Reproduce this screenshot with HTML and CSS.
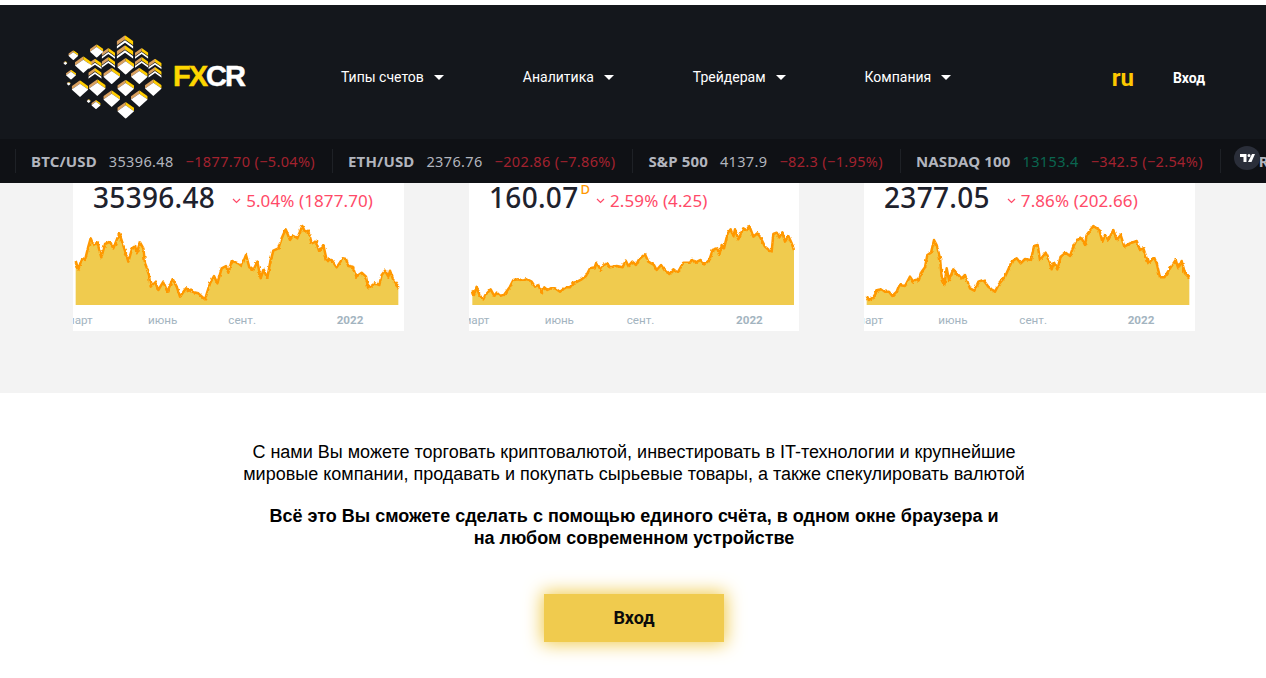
FILE: index.html
```html
<!DOCTYPE html>
<html lang="ru">

<head>
    <meta charset="UTF-8">
    <title>FXCR</title>
    <link rel="stylesheet" href="styles.css">
</head>

<body>

    <svg class="defs" width="0" height="0">
        <defs>
            <symbol id="cube" viewBox="-10 -10 20 20">
                <polygon points="-10,-3 0,-10 0,-6 -10,1" fill="#d9a05e"/>
                <polygon points="10,-3 0,-10 0,-6 10,1" fill="#ffcc00"/>
                <polygon points="-10,1 0,-6 10,1 0,10" fill="#fff"/>
            </symbol>
            <symbol id="chevron" viewBox="-10 -10 20 20">
                <polygon points="-10,-3 0,-10 0,-5 -10,2" fill="#d9a05e"/>
                <polygon points="10,-3 0,-10 0,-5 10,2" fill="#ffcc00"/>
                <polygon points="-10,3 0,-4 10,3 10,6 0,-1 -10,6" fill="#fff"/>
            </symbol>
            <filter id="rough" x="-5%" y="-5%" width="110%" height="110%">
                <feTurbulence type="fractalNoise" baseFrequency="0.09" numOctaves="2" seed="4"/>
                <feDisplacementMap in="SourceGraphic" scale="9" xChannelSelector="R" yChannelSelector="G"/>
            </filter>
        </defs>
    </svg>

    <header class="site-header">
        <a class="logo" href="#">
            <svg class="logo-mark" viewBox="0 0 330 270" width="110" height="90">
                <use href="#chevron" x="170" y="10" width="50" height="50"/>
                <use href="#chevron" x="125" y="48" width="40" height="40"/>
                <use href="#chevron" x="170" y="40" width="50" height="50"/>
                <use href="#chevron" x="225" y="48" width="40" height="40"/>
                <use href="#chevron" x="265" y="80" width="40" height="40"/>
                <use href="#chevron" x="265" y="105" width="40" height="40"/>
                <use href="#chevron" x="85" y="80" width="40" height="40"/>
                <use href="#chevron" x="85" y="108" width="40" height="40"/>
                <use href="#chevron" x="125" y="75" width="40" height="40"/>
                <use href="#chevron" x="225" y="75" width="40" height="40"/>
                <use href="#cube" x="90" y="37" width="40" height="40"/>
                <use href="#cube" x="25" y="55" width="30" height="30"/>
                <use href="#cube" x="45" y="73" width="50" height="50"/>
                <use href="#cube" x="18" y="113" width="30" height="30"/>
                <use href="#cube" x="172" y="78" width="50" height="50"/>
                <use href="#cube" x="130" y="107" width="50" height="50"/>
                <use href="#cube" x="213" y="107" width="50" height="50"/>
                <use href="#cube" x="35" y="145" width="50" height="50"/>
                <use href="#cube" x="87" y="142" width="50" height="50"/>
                <use href="#cube" x="172" y="143" width="50" height="50"/>
                <use href="#cube" x="255" y="142" width="50" height="50"/>
                <use href="#cube" x="130" y="175" width="50" height="50"/>
                <use href="#cube" x="213" y="175" width="50" height="50"/>
                <use href="#cube" x="172" y="210" width="50" height="50"/>
                <use href="#cube" x="94" y="204" width="28" height="28"/>
                <use href="#cube" x="10" y="87" width="12" height="12"/>
                <use href="#cube" x="20" y="149" width="12" height="12"/>
                <use href="#cube" x="80" y="201" width="12" height="12"/>
            </svg>
            <span class="logo-text"><b>FX</b>CR</span>
        </a>
        <nav class="main-nav">
            <a href="#">Типы счетов <i class="caret"></i></a>
            <a href="#">Аналитика <i class="caret"></i></a>
            <a href="#">Трейдерам <i class="caret"></i></a>
            <a href="#">Компания <i class="caret"></i></a>
        </nav>
        <div class="header-right">
            <a class="lang" href="#">ru</a>
            <a class="login" href="#">Вход</a>
        </div>
    </header>

    <div class="ticker">
        <div class="tick"><b>BTC/USD</b><span>35396.48</span><span class="neg">−1877.70 (−5.04%)</span></div>
        <div class="tick"><b>ETH/USD</b><span>2376.76</span><span class="neg">−202.86 (−7.86%)</span></div>
        <div class="tick"><b>S&amp;P 500</b><span>4137.9</span><span class="neg">−82.3 (−1.95%)</span></div>
        <div class="tick"><b>NASDAQ 100</b><span class="pos">13153.4</span><span class="neg">−342.5 (−2.54%)</span></div>
        <div class="tick tick-last"><b>R</b></div>
        <div class="tv-badge">
            <svg viewBox="0 0 26 24" width="26" height="24">
                <path d="M6 8h6.500v8H9.500v-5H6zM15 11a1.500 1.500 0 1 0 0-3 1.500 1.500 0 0 0 0 3zM18 8h3l-3.500 8H14z" fill="#fff"/>
            </svg>
        </div>
    </div>

    <section class="quotes">
        <div class="card card-wide">
            <div class="card-head">
                <span class="price">35396.48</span>
                <svg class="down" viewBox="0 0 9 6" width="9" height="6"><path d="M1 1l3.500 3.500L8 1" fill="none" stroke="#ff4a68" stroke-width="1.200"/></svg>
                <span class="change">5.04% (1877.70)</span>
            </div>
            <svg class="chart" viewBox="39 126 993 327" width="331" height="109">
                <polygon class="area" points="47,243 55,268 65,238 75,240 85,200 92,175 100,195 112,188 124,232 135,192 150,185 160,205 168,185 178,160 188,190 205,245 215,210 225,195 230,220 240,187 250,205 255,250 265,275 272,320 285,305 295,330 310,305 322,335 338,297 350,320 360,350 378,325 395,335 415,340 435,358 450,310 462,288 472,310 485,265 498,258 505,278 515,243 535,250 545,258 558,225 568,262 580,270 592,245 602,295 610,270 622,293 630,250 640,212 655,205 665,175 677,148 690,180 700,165 712,175 727,138 735,155 745,152 755,190 768,185 778,215 790,195 800,240 815,240 830,262 848,235 858,237 865,258 878,260 888,290 905,278 918,290 925,325 945,310 958,315 965,285 975,272 985,290 990,272 1000,300 1008,310 1015,325 1015,375 47,375"/>
                <polyline class="line" points="47,243 55,268 65,238 75,240 85,200 92,175 100,195 112,188 124,232 135,192 150,185 160,205 168,185 178,160 188,190 205,245 215,210 225,195 230,220 240,187 250,205 255,250 265,275 272,320 285,305 295,330 310,305 322,335 338,297 350,320 360,350 378,325 395,335 415,340 435,358 450,310 462,288 472,310 485,265 498,258 505,278 515,243 535,250 545,258 558,225 568,262 580,270 592,245 602,295 610,270 622,293 630,250 640,212 655,205 665,175 677,148 690,180 700,165 712,175 727,138 735,155 745,152 755,190 768,185 778,215 790,195 800,240 815,240 830,262 848,235 858,237 865,258 878,260 888,290 905,278 918,290 925,325 945,310 958,315 965,285 975,272 985,290 990,272 1000,300 1008,310 1015,325"/>
                <text x="18" y="432">март</text>
                <text x="264" y="432">июнь</text>
                <text x="505" y="432">сент.</text>
                <text class="year" x="830" y="432">2022</text>
            </svg>
        </div>

        <div class="card card-narrow">
            <div class="card-head">
                <span class="price">160.07</span>
                <sup class="delayed">D</sup>
                <svg class="down" viewBox="0 0 9 6" width="9" height="6"><path d="M1 1l3.500 3.500L8 1" fill="none" stroke="#ff4a68" stroke-width="1.200"/></svg>
                <span class="change">2.59% (4.25)</span>
            </div>
            <svg class="chart" viewBox="27 126 990 327" width="330" height="109">
                <polygon class="area" points="37,328 42,345 50,320 58,345 70,358 76,345 92,328 103,348 110,338 120,347 132,345 150,320 160,300 175,298 190,302 200,297 215,305 225,320 235,315 245,338 253,322 262,330 272,325 285,325 300,335 318,322 330,322 340,308 352,305 365,298 378,288 390,265 405,262 410,248 422,270 430,255 442,250 450,262 470,258 488,262 497,242 505,258 517,245 528,255 537,238 555,223 565,245 582,255 590,270 603,255 615,272 628,282 640,268 653,278 670,248 690,248 697,237 705,248 722,240 733,253 748,240 758,210 772,205 778,225 785,195 792,205 803,160 812,148 820,170 825,148 835,178 850,145 860,150 868,138 880,170 892,160 900,170 915,200 930,213 935,215 940,162 950,158 958,172 967,157 975,185 985,168 995,190 1002,210 1002,375 37,375"/>
                <polyline class="line" points="37,328 42,345 50,320 58,345 70,358 76,345 92,328 103,348 110,338 120,347 132,345 150,320 160,300 175,298 190,302 200,297 215,305 225,320 235,315 245,338 253,322 262,330 272,325 285,325 300,335 318,322 330,322 340,308 352,305 365,298 378,288 390,265 405,262 410,248 422,270 430,255 442,250 450,262 470,258 488,262 497,242 505,258 517,245 528,255 537,238 555,223 565,245 582,255 590,270 603,255 615,272 628,282 640,268 653,278 670,248 690,248 697,237 705,248 722,240 733,253 748,240 758,210 772,205 778,225 785,195 792,205 803,160 812,148 820,170 825,148 835,178 850,145 860,150 868,138 880,170 892,160 900,170 915,200 930,213 935,215 940,162 950,158 958,172 967,157 975,185 985,168 995,190 1002,210"/>
                <text x="8" y="432">март</text>
                <text x="254" y="432">июнь</text>
                <text x="500" y="432">сент.</text>
                <text class="year" x="828" y="432">2022</text>
            </svg>
        </div>

        <div class="card card-wide">
            <div class="card-head">
                <span class="price">2377.05</span>
                <svg class="down" viewBox="0 0 9 6" width="9" height="6"><path d="M1 1l3.500 3.500L8 1" fill="none" stroke="#ff4a68" stroke-width="1.200"/></svg>
                <span class="change">7.86% (202.66)</span>
            </div>
            <svg class="chart" viewBox="27 126 993 327" width="331" height="109">
                <polygon class="area" points="35,348 42,360 55,352 68,330 80,328 90,335 102,335 112,348 125,335 133,315 150,318 165,290 175,305 185,295 190,305 200,275 210,262 217,225 228,218 237,180 245,195 255,235 260,290 268,315 275,265 282,300 295,268 310,285 320,295 330,285 345,325 358,332 370,305 385,300 400,320 420,335 432,312 450,290 470,245 485,235 497,250 510,237 528,240 537,198 548,195 555,240 572,218 582,240 590,268 597,248 607,268 617,230 632,218 645,228 655,200 665,180 680,175 690,195 695,165 715,138 733,150 742,185 750,165 760,180 775,150 785,180 797,165 808,200 825,190 845,183 855,210 865,205 880,250 897,232 905,250 915,292 928,292 945,265 962,240 970,265 980,243 990,280 1003,293 1003,375 35,375"/>
                <polyline class="line" points="35,348 42,360 55,352 68,330 80,328 90,335 102,335 112,348 125,335 133,315 150,318 165,290 175,305 185,295 190,305 200,275 210,262 217,225 228,218 237,180 245,195 255,235 260,290 268,315 275,265 282,300 295,268 310,285 320,295 330,285 345,325 358,332 370,305 385,300 400,320 420,335 432,312 450,290 470,245 485,235 497,250 510,237 528,240 537,198 548,195 555,240 572,218 582,240 590,268 597,248 607,268 617,230 632,218 645,228 655,200 665,180 680,175 690,195 695,165 715,138 733,150 742,185 750,165 760,180 775,150 785,180 797,165 808,200 825,190 845,183 855,210 865,205 880,250 897,232 905,250 915,292 928,292 945,265 962,240 970,265 980,243 990,280 1003,293"/>
                <text x="4" y="432">март</text>
                <text x="250" y="432">июнь</text>
                <text x="493" y="432">сент.</text>
                <text class="year" x="818" y="432">2022</text>
            </svg>
        </div>
    </section>

    <section class="intro">
        <p class="intro-text">С нами Вы можете торговать криптовалютой, инвестировать в IT-технологии и крупнейшие<br>мировые компании, продавать и покупать сырьевые товары, а также спекулировать валютой</p>
        <p class="intro-strong">Всё это Вы сможете сделать с помощью единого счёта, в одном окне браузера и<br>на любом современном устройстве</p>
        <a class="btn-login" href="#">Вход</a>
    </section>

</body>
</html>
```

FILE: styles.css
```css
html, body {
    margin: 0;
    padding: 0;
}

body {
    background: white;
    padding-top: 5px;
    height: 673px;
    overflow: hidden;
    font-family: "Liberation Sans", Arial, sans-serif;
}

a {
    text-decoration: none;
    color: inherit;
}

.defs {
    display: block;
    height: 0;
}

/* header */
.site-header {
    height: 125px;
    padding-top: 9px;
    background: #14171c;
    color: white;
    display: flex;
    align-items: center;
}

.logo {
    display: flex;
    align-items: center;
    margin-left: 60px;
    width: 281px;
}

.logo-mark {
    flex: none;
}

.logo-text {
    margin-left: 3px;
    margin-top: -1px;
    font-size: 29px;
    font-weight: bold;
    letter-spacing: -2px;
    color: white;
    -webkit-text-stroke: 0.5px currentColor;
}

.logo-text b {
    color: #fdd600;
}

.main-nav {
    display: flex;
    gap: 79px;
    font-family: Roboto, sans-serif;
    font-size: 14px;
}

.main-nav a {
    display: flex;
    align-items: center;
    gap: 10px;
}

.caret {
    width: 0;
    height: 0;
    margin-top: 2px;
    border-left: 5px solid transparent;
    border-right: 5px solid transparent;
    border-top: 5px solid white;
}

.header-right {
    margin-left: auto;
    padding: 2px 61px 0 0;
    display: flex;
    align-items: center;
    gap: 39px;
    font-family: Roboto, sans-serif;
    font-weight: bold;
}

.lang {
    color: #fdc800;
    font-size: 24px;
}

.login {
    font-size: 14px;
}

/* ticker */
.ticker {
    position: relative;
    height: 44px;
    padding-left: 15px;
    background: #0f1115;
    display: flex;
    align-items: center;
    overflow: hidden;
    white-space: nowrap;
    font-family: "Noto Sans", sans-serif;
    font-size: 14.5px;
    color: #b2b5be;
}

.tick {
    flex: none;
    height: 24px;
    padding: 0 17px 0 15px;
    border-left: 1px solid #1e2126;
    display: flex;
    align-items: center;
    gap: 12px;
}

.tick b {
    font-size: 15px;
    letter-spacing: 0.15px;
}

.tick span {
    letter-spacing: 0.35px;
}

.tick-last {
    padding-left: 38px;
}

.neg {
    color: #a3222f;
}

.pos {
    color: #0a6650;
}

.tv-badge {
    position: absolute;
    left: 1234px;
    top: 7px;
    width: 26px;
    height: 24px;
    border-radius: 50%;
    background: #2a2e39;
}

.tv-badge svg {
    display: block;
}

/* quote cards */
.quotes {
    height: 210px;
    box-sizing: border-box;
    padding-left: 73px;
    background: #f3f3f3;
    display: flex;
    gap: 65px;
    align-items: flex-start;
}

.card {
    background: white;
    height: 148px;
}

.card-wide {
    width: 331px;
}

.card-narrow {
    width: 330px;
}

.card-head {
    height: 39px;
    padding-left: 20px;
    display: flex;
    align-items: flex-start;
    font-family: "Noto Sans", sans-serif;
}

.price {
    font-size: 28px;
    font-weight: 500;
    line-height: 28px;
    letter-spacing: 0.3px;
    color: #1e222d;
}

.delayed {
    font-size: 13px;
    font-weight: 500;
    line-height: 13px;
    color: #ff9800;
    margin-left: 2px;
}

.down {
    margin: 15px 5px 0 17px;
}

.delayed + .down {
    margin-left: 6px;
}

.change {
    font-size: 17px;
    line-height: 24px;
    letter-spacing: 0.1px;
    margin-top: 6px;
    color: #ff4a68;
}

.chart {
    display: block;
}

.area {
    fill: #f0cb4e;
}

.line {
    fill: none;
    stroke: #ff9800;
    stroke-width: 7.5;
    stroke-linejoin: round;
    filter: url(#rough);
}

.chart text {
    font-family: Roboto, sans-serif;
    font-size: 35px;
    fill: #a3b4c0;
}

.chart .year {
    font-weight: bold;
}

/* text block */
.intro {
    padding: 48px 0 0 2px;
    display: flex;
    flex-direction: column;
    align-items: center;
    text-align: center;
    font-size: 18px;
    line-height: 22px;
    color: black;
}

.intro p {
    margin: 0;
}

.intro .intro-strong {
    margin-top: 20px;
    font-weight: bold;
}

.btn-login {
    margin-top: 45px;
    width: 180px;
    height: 48px;
    background: #f0cb4e;
    box-shadow: 0 0 18px 2px #f0cb4e;
    font-family: Roboto, sans-serif;
    font-size: 18px;
    font-weight: bold;
    line-height: 48px;
    color: #0b0b0b;
}
```
